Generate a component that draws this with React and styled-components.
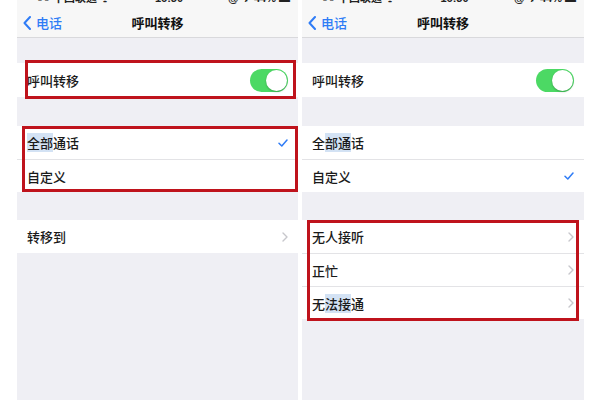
import React from "react";
import styled, { createGlobalStyle } from "styled-components";

const Global = createGlobalStyle`
  html, body { margin: 0; padding: 0; background: #ffffff; }
  body { font-family: "Noto Sans CJK SC", "Noto Sans", sans-serif; }
  * { box-sizing: border-box; }
`;

const Page = styled.div`
  width: 600px;
  height: 400px;
  overflow: hidden;
  display: flex;
  gap: 4px;
  padding-left: 17px;
  background: #ffffff;
`;

const Phone = styled.div`
  width: ${(p) => p.$w}px;
  height: 400px;
  background: #efeff4;
  display: flex;
  flex-direction: column;
`;

const StatusBar = styled.div`
  height: 8px;
  flex: none;
  overflow: hidden;
  background: #f7f7f7;
  display: flex;
  align-items: flex-end;
  justify-content: space-between;
  padding: 0 8px;
  font-family: "Liberation Sans", "Noto Sans CJK SC", sans-serif;
  font-size: 11px;
  line-height: 11px;
  color: #222;
`;

const StatusItem = styled.span`
  margin-bottom: 4px;
  font-weight: 600;
`;

const NavBar = styled.div`
  height: 30px;
  flex: none;
  background: #f7f7f7;
  border-bottom: 1px solid #d9d9dc;
  display: grid;
  grid-template-columns: 1fr auto 1fr;
  align-items: center;
  padding: 0 6px;
`;

const Back = styled.div`
  display: flex;
  align-items: center;
  gap: 5px;
  color: #2f7cf6;
  font-size: 13px;
  font-weight: 500;
`;

const Title = styled.div`
  font-size: 13px;
  font-weight: 700;
  color: #111;
`;

const Gap = styled.div`
  height: ${(p) => p.$h}px;
  flex: none;
`;

const Group = styled.div`
  position: relative;
  background: #ffffff;
  flex: none;
`;

const Frame = styled.div`
  position: absolute;
  left: ${(p) => p.$l}px;
  right: ${(p) => p.$r}px;
  top: ${(p) => p.$t}px;
  bottom: ${(p) => p.$b}px;
  border: 3px solid #bf131c;
  pointer-events: none;
`;

const Row = styled.div`
  height: ${(p) => p.$h || 33}px;
  display: flex;
  align-items: center;
  justify-content: space-between;
  padding: 0 10px;
  position: relative;
  font-size: 13px;
  font-weight: 500;
  color: #1a1a1a;
  & + & {
    border-top: 1px solid #e3e3e6;
  }
`;

const Label = styled.span`
  line-height: 1;
`;

const Mark = styled.span`
  background: #d3e2f4;
`;

const Toggle = styled.div`
  width: 38px;
  height: 23px;
  border-radius: 12px;
  background: #4cd964;
  display: flex;
  justify-content: flex-end;
  align-items: center;
  padding: 1px;
`;

const Knob = styled.div`
  width: 21px;
  height: 21px;
  border-radius: 50%;
  background: #ffffff;
  box-shadow: 0 1px 2px rgba(0, 0, 0, 0.25);
`;

const BackChevron = () => (
  <svg width="8" height="14" viewBox="0 0 8 14">
    <path d="M7 1 L1.5 7 L7 13" fill="none" stroke="#2f7cf6" strokeWidth="2" strokeLinecap="round" strokeLinejoin="round" />
  </svg>
);

const Check = () => (
  <svg width="10" height="8" viewBox="0 0 10 8">
    <path d="M1 4.2 L3.8 7 L9 1" fill="none" stroke="#2f7cf6" strokeWidth="1.5" strokeLinecap="round" strokeLinejoin="round" />
  </svg>
);

const Chevron = () => (
  <svg width="6" height="10" viewBox="0 0 6 10">
    <path d="M1 1 L5 5 L1 9" fill="none" stroke="#c7c7cc" strokeWidth="1.4" strokeLinecap="round" strokeLinejoin="round" />
  </svg>
);

const Header = () => (
  <>
    <StatusBar>
      <StatusItem>•••○○ 中国联通 ᯤ</StatusItem>
      <StatusItem>16:30</StatusItem>
      <StatusItem>@ ✈ 44% ▬</StatusItem>
    </StatusBar>
    <NavBar>
      <Back>
        <BackChevron />
        <span>电话</span>
      </Back>
      <Title>呼叫转移</Title>
      <div />
    </NavBar>
  </>
);

const SwitchRow = () => (
  <Row $h={34}>
    <Label>呼叫转移</Label>
    <Toggle>
      <Knob />
    </Toggle>
  </Row>
);

export default function App() {
  return (
    <>
      <Global />
      <Page>
        <Phone $w={281}>
          <Header />
          <Gap $h={25} />
          <Group>
            <SwitchRow />
            <Frame $l={8} $r={2} $t={-3} $b={-2} />
          </Group>
          <Gap $h={29} />
          <Group>
            <Row>
              <Label>
                <Mark>全部</Mark>通话
              </Label>
              <Check />
            </Row>
            <Row>
              <Label>自定义</Label>
            </Row>
            <Frame $l={5} $r={0} $t={0} $b={0} />
          </Group>
          <Gap $h={28} />
          <Group>
            <Row>
              <Label>转移到</Label>
              <Chevron />
            </Row>
          </Group>
        </Phone>
        <Phone $w={282}>
          <Header />
          <Gap $h={25} />
          <Group>
            <SwitchRow />
          </Group>
          <Gap $h={29} />
          <Group>
            <Row>
              <Label>
                全<Mark>部通</Mark>话
              </Label>
            </Row>
            <Row>
              <Label>自定义</Label>
              <Check />
            </Row>
          </Group>
          <Gap $h={28} />
          <Group>
            <Row>
              <Label>无人接听</Label>
              <Chevron />
            </Row>
            <Row>
              <Label>正忙</Label>
              <Chevron />
            </Row>
            <Row>
              <Label>
                无<Mark>法接</Mark>通
              </Label>
              <Chevron />
            </Row>
            <Frame $l={5} $r={5} $t={0} $b={-2} />
          </Group>
        </Phone>
      </Page>
    </>
  );
}
